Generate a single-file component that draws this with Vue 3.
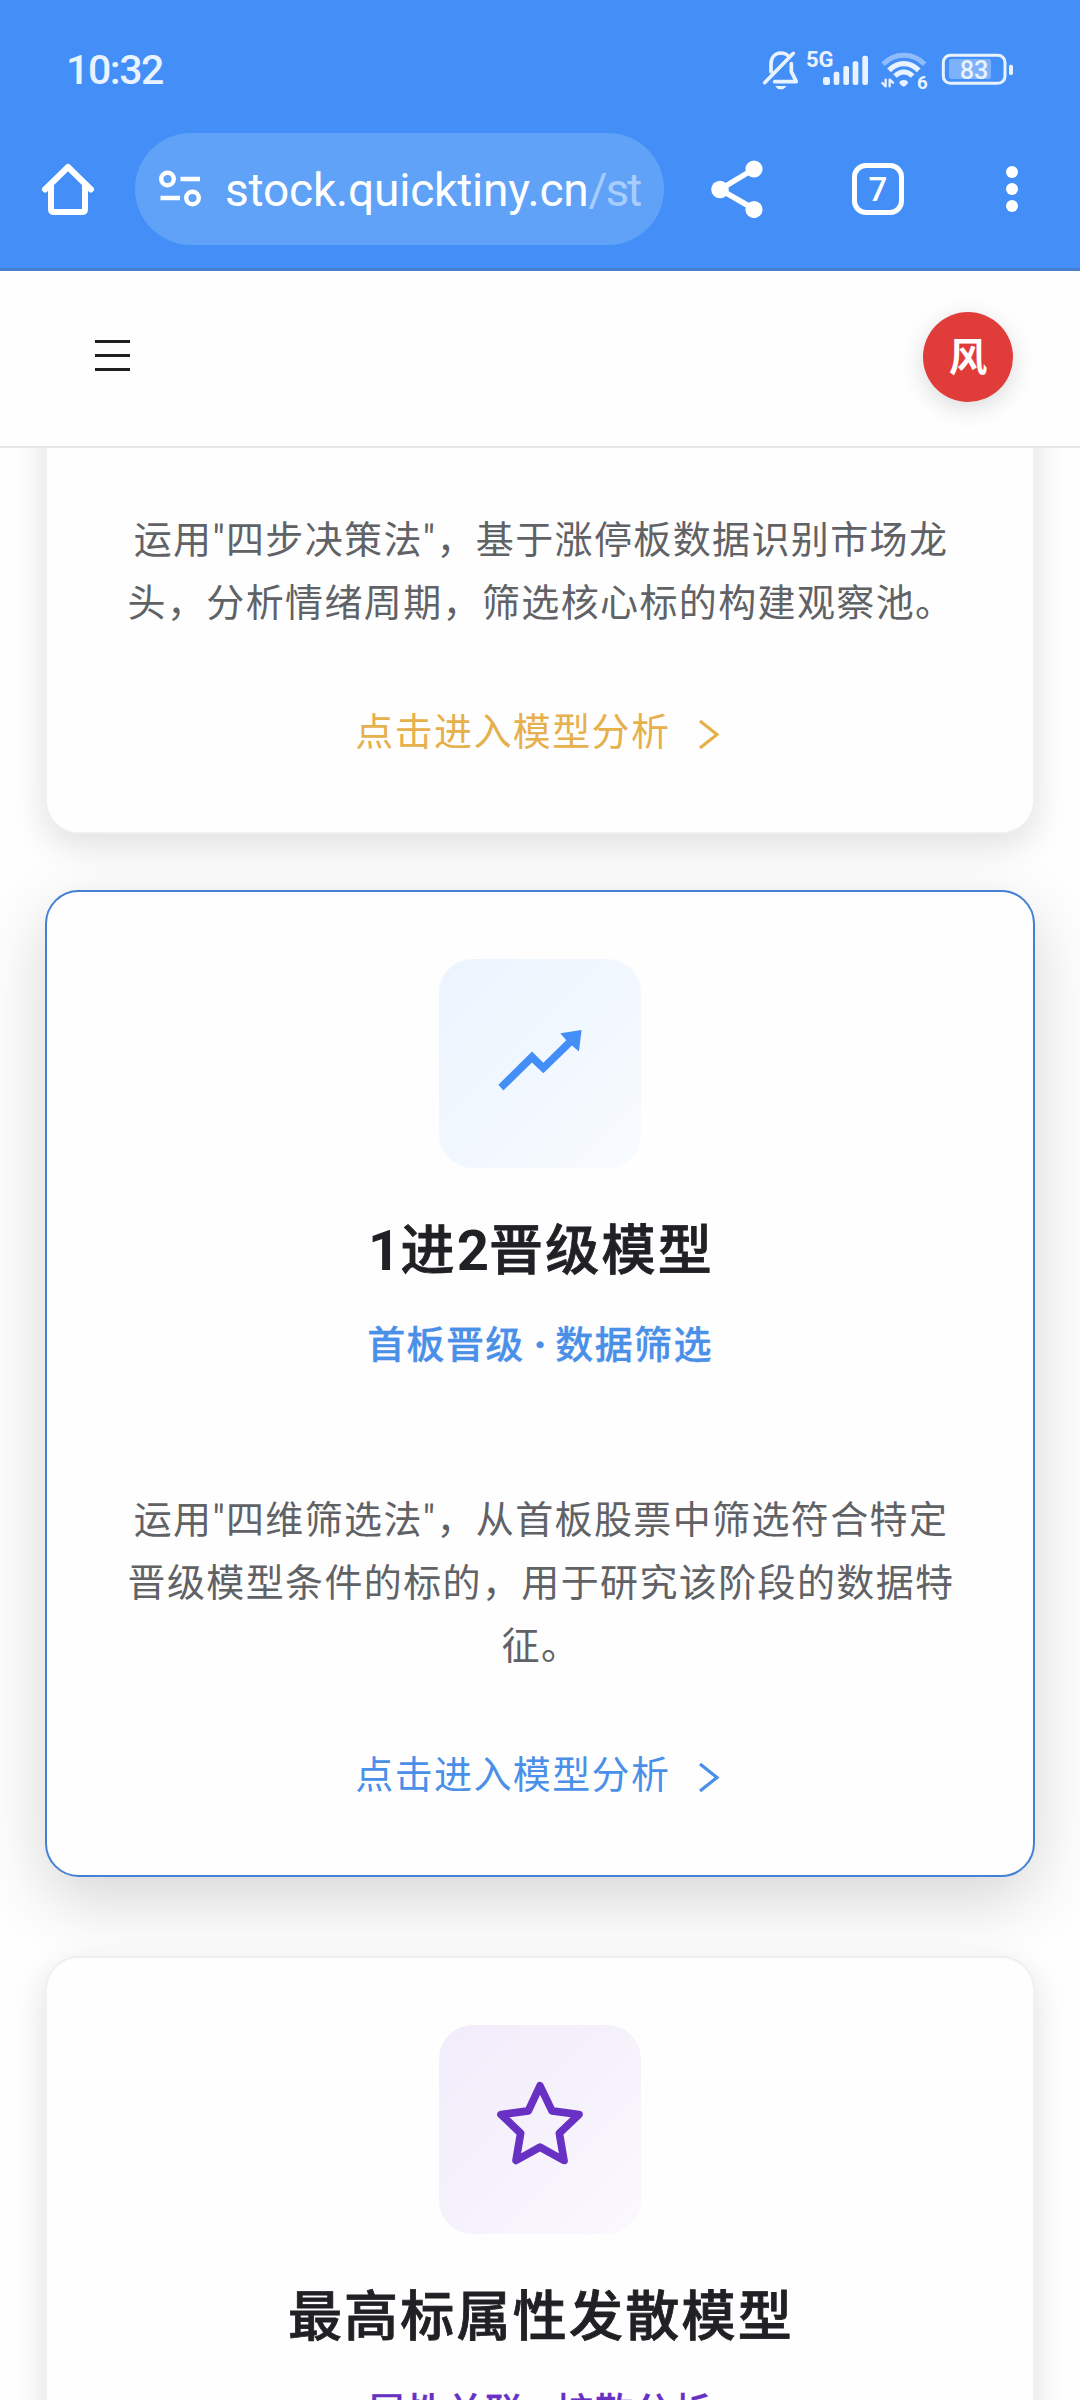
<script setup>
const cards = [
  {
    id: 'leader',
    theme: 'gold',
    desc: ['运用"四步决策法"，基于涨停板数据识别市场龙', '头，分析情绪周期，筛选核心标的构建观察池。'],
  },
  {
    id: 'promote',
    theme: 'blue',
    icon: 'trend',
    title: '1进2晋级模型',
    sub: ['首板晋级', '数据筛选'],
    desc: ['运用"四维筛选法"，从首板股票中筛选符合特定', '晋级模型条件的标的，用于研究该阶段的数据特', '征。'],
  },
  {
    id: 'diverge',
    theme: 'purple',
    icon: 'star',
    title: '最高标属性发散模型',
    sub: ['属性关联', '扩散分析'],
    desc: [],
  },
]

// Digits in a title are set heavier than the characters around them.
const parts = (title) => title.split(/(\d+)/).filter(Boolean)
const isDigit = (part) => /^\d+$/.test(part)
</script>

<template>
  <div class="screen">
    <header class="browser">
      <div class="status">
        <span class="clock">10:32</span>
        <svg class="status-icons" viewBox="0 0 900 240" fill="none" stroke="#e8f3ff" stroke-linecap="round" stroke-linejoin="round">
          <g stroke-width="11">
            <path d="M93 125V103C93 82 105 70 122 69C132 69 141 73 147 80" />
            <path d="M74 158L160 70" />
            <path d="M154 101V125L169 155H104" />
          </g>
          <path d="M106 168H139C135 175 130 178 122 178S110 175 106 168Z" fill="#e8f3ff" stroke="none" />
          <text class="net" x="198" y="111" font-size="66">5G</text>
          <g fill="#e8f3ff" stroke="none">
            <rect x="249" y="141" width="21" height="24" rx="7" />
            <rect x="281" y="125" width="17" height="40" rx="6" />
            <rect x="310" y="108" width="17" height="57" rx="6" />
            <rect x="338" y="94" width="17" height="71" rx="6" />
            <rect x="367" y="77" width="17" height="88" rx="6" />
          </g>
          <path d="M429 103C464 67 519 67 554 103" stroke="#8fbcfc" stroke-width="15" stroke-linecap="butt" />
          <path d="M447 121C473 94 510 94 536 121" stroke-width="16" stroke-linecap="butt" />
          <path d="M465 138C481 122 502 122 518 138" stroke-width="15" stroke-linecap="butt" />
          <path d="M491 150C499 150 504 153 504 158C503 162 496 168 491 170C486 168 479 162 478 158C478 153 484 150 491 150Z" fill="#e8f3ff" stroke="none" />
          <path d="M437 149V169L427 159M449 169V149L459 158" stroke-width="7" />
          <text class="net" x="531" y="177" font-size="56">6</text>
          <rect x="627" y="87" width="126" height="60" rx="6" fill="#7db2fb" stroke="none" />
          <rect x="610" y="76" width="185" height="84" rx="21" stroke-width="9" />
          <rect x="807" y="104" width="12" height="31" rx="5" fill="#e8f3ff" stroke="none" />
          <text class="batt" x="659" y="148" font-size="76">83</text>
        </svg>
      </div>
      <div class="toolbar">
        <svg class="home" viewBox="0 0 56 56" fill="none" stroke="#fff" stroke-width="6" stroke-linecap="round" stroke-linejoin="round">
          <path d="M5 28.500L28 6L51 28.500" />
          <path d="M11 24V48Q11 51 14 51H42Q45 51 45 48V24" />
        </svg>
        <div class="omnibox">
          <svg class="tune" viewBox="0 0 42 38" fill="none" stroke="#fff" stroke-width="4.400">
            <circle cx="8.500" cy="9" r="6.300" />
            <path d="M21.500 9H41M1.500 28H21" />
            <circle cx="33.500" cy="28" r="6.300" />
          </svg>
          <div class="url">stock.quicktiny.cn<span class="path">/str</span></div>
        </div>
        <svg class="share" viewBox="0 0 52 58">
          <path d="M43 9L9 29.500L43 49" fill="none" stroke="#fff" stroke-width="5.500" />
          <g fill="#fff"><circle cx="9" cy="29.500" r="8.800" /><circle cx="43" cy="9" r="8.600" /><circle cx="43" cy="49.500" r="8.600" /></g>
        </svg>
        <div class="tabs">7</div>
        <div class="dots"><i></i><i></i><i></i></div>
      </div>
    </header>

    <nav class="nav">
      <div class="burger"><i></i><i></i><i></i></div>
      <div class="avatar">风</div>
    </nav>

    <main class="list">
      <article v-for="c in cards" :key="c.id" class="card" :class="[c.theme, { cut: !c.title }]">
        <template v-if="c.title">
          <div class="tile">
            <svg v-if="c.icon === 'trend'" viewBox="297 238 606 628">
              <path fill="#448ef8" d="M475 616L576 516L610 550L679 482L661 461L725 451L717 516L696 498L610 581L576 549L490 633Z" />
            </svg>
            <svg v-else viewBox="57 75 606 626">
              <path fill="none" stroke="#6931c3" stroke-width="23" stroke-linejoin="round" d="M360 257L396 332L477 343L418 399L432 481L360 441L288 481L302 399L243 343L325 332Z" />
            </svg>
          </div>
          <h2><span v-for="(p, i) in parts(c.title)" :key="i" :class="{ digit: isDigit(p) }">{{ p }}</span></h2>
          <h3>{{ c.sub[0] }} <b>·</b> {{ c.sub[1] }}</h3>
        </template>
        <template v-if="c.desc.length">
          <p class="desc"><span v-for="line in c.desc" :key="line">{{ line }}</span></p>
          <a class="link">
            点击进入模型分析
            <svg viewBox="0 0 34 40" fill="none" stroke="currentColor" stroke-width="3.200"><path d="M11 7L28 20.500L11 34" /></svg>
          </a>
        </template>
      </article>
    </main>
  </div>
</template>

<style>
body {
  margin: 0;
  background: #fff;
}
</style>

<style scoped>
.screen {
  width: 1080px;
  height: 2400px;
  overflow: hidden;
  display: flex;
  flex-direction: column;
  background: #fefefe;
  font-family: Roboto, "Noto Sans CJK SC", sans-serif;
}
.browser {
  box-sizing: border-box;
  height: 271px;
  flex: none;
  background: #448ef8;
  border-bottom: 3px solid #457fce;
}
.status {
  height: 80px;
  padding: 30px 40px 0 66px;
  display: flex;
  justify-content: space-between;
}
.clock {
  font-size: 41px;
  font-weight: 500;
  line-height: 81px;
  color: #e8f3ff;
  letter-spacing: -1.4px;
}
.status-icons {
  width: 300px;
  height: 80px;
}
.net {
  font-family: Roboto, sans-serif;
  font-weight: 700;
  fill: #e8f3ff;
  stroke: none;
}
.batt {
  font-family: Roboto, sans-serif;
  font-weight: 500;
  fill: #e8f3ff;
  stroke: none;
}
.toolbar {
  display: flex;
  align-items: center;
  height: 112px;
  padding: 23px 62px 0 40px;
}
.home {
  width: 56px;
  height: 56px;
  flex: none;
}
.omnibox {
  box-sizing: border-box;
  width: 529px;
  height: 112px;
  margin-left: 39px;
  padding: 0 22px 0 24px;
  border-radius: 56px;
  background: #60a2f8;
  display: flex;
  align-items: center;
  flex: none;
}
.tune {
  width: 42px;
  height: 38px;
  flex: none;
}
.url {
  width: 416px;
  margin-left: 24px;
  padding-top: 2px;
  flex: none;
  overflow: hidden;
  white-space: nowrap;
  font-size: 46px;
  line-height: 64px;
  letter-spacing: -0.18px;
  color: #fff;
}
.path {
  color: #a8cdfc;
  letter-spacing: -2px;
}
.share {
  width: 52px;
  height: 58px;
  margin-left: 47px;
  flex: none;
}
.tabs {
  box-sizing: border-box;
  width: 52px;
  height: 52px;
  margin-left: 89px;
  border: 5.5px solid #fff;
  border-radius: 14px;
  color: #fff;
  font-size: 33px;
  font-weight: 500;
  line-height: 43px;
  text-align: center;
  flex: none;
}
.dots {
  margin-left: auto;
  display: flex;
  flex-direction: column;
  gap: 5px;
}
.dots i {
  width: 12px;
  height: 12px;
  border-radius: 50%;
  background: #fff;
}
.nav {
  box-sizing: border-box;
  height: 177px;
  flex: none;
  padding: 0 67px 4px 95px;
  display: flex;
  align-items: center;
  justify-content: space-between;
  background: #fefefe;
  border-bottom: 2px solid #e6e6eb;
  z-index: 3;
}
.burger {
  display: flex;
  flex-direction: column;
  gap: 10.5px;
  margin-top: -2px;
}
.burger i {
  width: 35px;
  height: 3.4px;
  background: #1f1f1f;
}
.avatar {
  width: 90px;
  height: 90px;
  border-radius: 50%;
  background: #e03c3a;
  color: #fff;
  font-size: 38.5px;
  font-weight: 700;
  line-height: 91px;
  text-align: center;
  box-shadow: 0 6px 23px rgba(0, 0, 0, 0.14);
}
.list {
  flex: 1;
  min-height: 0;
  overflow: hidden;
  padding: 0 45px;
  display: flex;
  flex-direction: column;
  gap: 67.5px;
}
.card {
  box-sizing: border-box;
  width: 990px;
  flex: none;
  padding: 67.5px 2px 68px;
  border: 2px solid #f0f0f0;
  border-radius: 33.75px;
  background: #fefefe;
  box-shadow: 0 11.25px 33.75px rgba(0, 0, 0, 0.12);
  display: flex;
  flex-direction: column;
  align-items: center;
}
.card.cut {
  margin-top: -100px;
  padding-top: 46.5px;
}
.card.blue {
  margin-top: -12px;
  margin-bottom: 12px;
  padding-bottom: 67.5px;
  border-color: #4380d6;
  box-shadow: 0 22.5px 67.5px rgba(0, 0, 0, 0.16);
  z-index: 1;
}
.card.purple {
  height: 900px;
  padding-top: 66.5px;
}
.purple h2 {
  margin-top: 45.5px;
}
.tile {
  width: 202px;
  height: 209px;
  border-radius: 33.75px;
  overflow: hidden;
}
.tile svg {
  display: block;
  width: 100%;
  height: 100%;
}
.blue .tile {
  background: linear-gradient(135deg, #ebf4fe, #f8fbff);
}
.purple .tile {
  background: linear-gradient(135deg, #f0ecfa, #fbf8fe);
}
h2 {
  margin: 44.5px 0 0;
  padding-left: 2px;
  font-size: 54px;
  letter-spacing: 2.25px;
  font-weight: 500;
  line-height: 78.75px;
  color: #202124;
  -webkit-text-stroke: 0.8px #202124;
}
.digit {
  font-size: 56.25px;
  font-weight: 700;
  letter-spacing: 0;
  line-height: 1;
  -webkit-text-stroke: 0;
}
h3 {
  margin: 22.5px 0 0;
  font-size: 38px;
  letter-spacing: 1.375px;
  word-spacing: -1.6px;
  font-weight: 500;
  line-height: 63px;
  -webkit-text-stroke: 0.3px currentColor;
}
h3 b {
  font-weight: 900;
  letter-spacing: 0;
}
.desc {
  margin: 112px 0 0;
  padding-left: 2px;
  font-size: 38px;
  letter-spacing: 1.375px;
  line-height: 63px;
  text-align: center;
  color: #606266;
}
.desc span {
  display: block;
  white-space: nowrap;
}
.link {
  margin-top: 66.5px;
  margin-left: -2px;
  display: flex;
  align-items: center;
  gap: 18.4px;
  font-size: 38px;
  letter-spacing: 1.375px;
  line-height: 63px;
}
.link svg {
  width: 34px;
  height: 40px;
  margin-top: 3px;
}
.gold .link {
  color: #e6b04c;
}
.blue .link,
.blue h3 {
  color: #4a8fe8;
}
.purple h3 {
  color: #6931c3;
}
</style>
